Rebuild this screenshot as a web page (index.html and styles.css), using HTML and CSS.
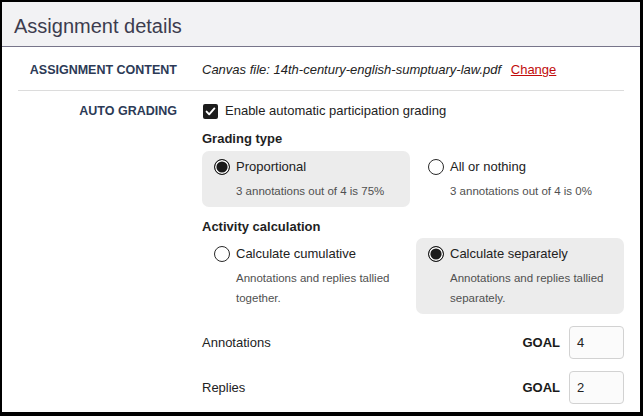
FILE: index.html
```html
<!DOCTYPE html>
<html lang="en">
<head>
<meta charset="utf-8">
<title>Assignment details</title>
<link rel="stylesheet" href="styles.css">
</head>
<body>
<div class="frame">
  <div class="header">Assignment details</div>
  <div class="content">
    <div class="row row-first">
      <div class="label">ASSIGNMENT CONTENT</div>
      <div class="value"><em>Canvas file: 14th-century-english-sumptuary-law.pdf</em> <a class="change" href="#">Change</a></div>
    </div>
    <div class="row row-second">
      <div class="label">AUTO GRADING</div>
      <div class="value">
        <div class="check-line">
          <span class="checkbox"><svg width="15" height="15" viewBox="0 0 15 15"><path d="M3.6 7.6 L6.2 10.3 L11.4 4.4" fill="none" stroke="#fff" stroke-width="1.9" stroke-linecap="round" stroke-linejoin="round"/></svg></span>
          <span>Enable automatic participation grading</span>
        </div>
        <div class="group-title gt-1">Grading type</div>
        <div class="options opt-1">
          <div class="option selected">
            <div class="opt-title"><span class="radio on"></span><span>Proportional</span></div>
            <div class="opt-sub">3 annotations out of 4 is 75%</div>
          </div>
          <div class="option">
            <div class="opt-title"><span class="radio"></span><span>All or nothing</span></div>
            <div class="opt-sub">3 annotations out of 4 is 0%</div>
          </div>
        </div>
        <div class="group-title gt-2">Activity calculation</div>
        <div class="options">
          <div class="option">
            <div class="opt-title"><span class="radio"></span><span>Calculate cumulative</span></div>
            <div class="opt-sub">Annotations and replies tallied together.</div>
          </div>
          <div class="option selected">
            <div class="opt-title"><span class="radio on"></span><span>Calculate separately</span></div>
            <div class="opt-sub">Annotations and replies tallied separately.</div>
          </div>
        </div>
        <div class="goal-row goal-first">
          <span class="goal-label">Annotations</span>
          <span class="goal-right"><span class="goal">GOAL</span><span class="goal-input">4</span></span>
        </div>
        <div class="goal-row">
          <span class="goal-label">Replies</span>
          <span class="goal-right"><span class="goal">GOAL</span><span class="goal-input">2</span></span>
        </div>
      </div>
    </div>
  </div>
</div>
</body>
</html>
```

FILE: styles.css
```css
html, body {
  margin: 0;
  padding: 0;
  background: #000;
  height: 416px;
  overflow: hidden;
}
body {
  font-family: "Liberation Sans", Arial, sans-serif;
  color: #222;
  font-size: 13px;
}
.frame {
  margin: 2px 3px 0 2px;
  height: 410px;
  background: #fff;
  box-sizing: border-box;
  overflow: hidden;
}
.header {
  height: 45px;
  box-sizing: border-box;
  background: #f2f2f4;
  border-bottom: 1px solid #77758a;
  padding: 3px 0 0 12px;
  font-size: 20px;
  line-height: 42px;
  color: #3c3c4e;
}
.content {
  padding: 0 16px;
}
.row {
  display: grid;
  grid-template-columns: 159px 1fr;
  column-gap: 25px;
  line-height: 20px;
}
.row-first {
  padding: 13px 0 10px;
  border-bottom: 1px solid #dcdcdc;
}
.row-second {
  padding-top: 10px;
}
.label {
  text-align: right;
  font-weight: bold;
  font-size: 12.5px;
  color: #2c3a56;
}
.value em {
  font-style: italic;
  color: #222;
}
.change {
  color: #c10c0c;
  text-decoration: underline;
  margin-left: 6px;
}
.check-line {
  display: flex;
  align-items: center;
  gap: 7px;
  padding-left: 1px;
}
.checkbox {
  width: 15px;
  height: 15px;
  background: #1c1c1c;
  border-radius: 2px;
  display: inline-flex;
}
.group-title {
  font-weight: bold;
  font-size: 13px;
  color: #1f1f1f;
}
.gt-1 { margin-top: 8px; }
.gt-2 { margin-top: 10px; }
.options {
  display: grid;
  grid-template-columns: 1fr 1fr;
  column-gap: 6px;
  margin-top: 1px;
}
.opt-1 { margin-top: 2px; }
.option {
  padding: 6px 12px 6px;
  border-radius: 7px;
}
.option.selected {
  background: #ececec;
}
.opt-title {
  display: flex;
  align-items: center;
  gap: 6px;
  font-size: 13px;
  color: #222;
}
.radio {
  width: 16px;
  height: 16px;
  box-sizing: border-box;
  border: 1.3px solid #2a2a2a;
  border-radius: 50%;
  background: #fff;
  flex: none;
}
.radio.on {
  background: #1b1b1b;
  border: 1.3px solid #1b1b1b;
  box-shadow: inset 0 0 0 1.4px #fff;
}
.opt-sub {
  margin-top: 4px;
  padding-left: 22px;
  font-size: 11.5px;
  line-height: 20px;
  color: #505050;
}
.goal-row {
  display: flex;
  justify-content: space-between;
  align-items: center;
  height: 33px;
  margin-top: 12px;
}
.goal-first { margin-top: 12px; }
.goal-label {
  font-size: 13px;
  color: #222;
}
.goal-right {
  display: flex;
  align-items: center;
  gap: 9px;
}
.goal {
  font-weight: bold;
  font-size: 13px;
  color: #1a1a1a;
}
.goal-input {
  width: 55px;
  height: 33px;
  box-sizing: border-box;
  border: 1px solid #d2d2d2;
  border-radius: 4px;
  background: #fbfbfb;
  padding-left: 7px;
  line-height: 31px;
  font-size: 13px;
  color: #222;
}
```
